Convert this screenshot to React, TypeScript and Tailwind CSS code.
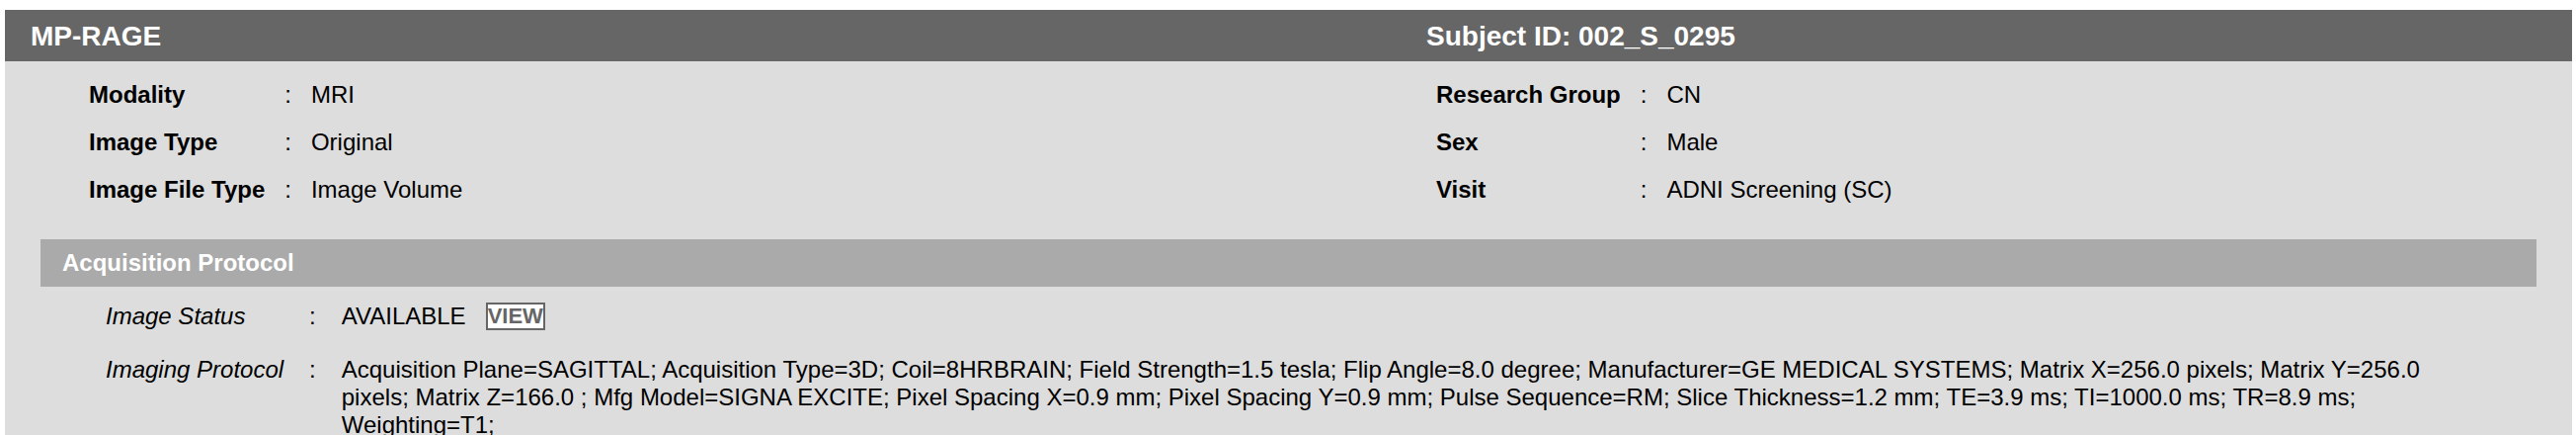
type Field = { label: string; value: string };

const imageFields: Field[] = [
  { label: "Modality", value: "MRI" },
  { label: "Image Type", value: "Original" },
  { label: "Image File Type", value: "Image Volume" },
];

const subjectFields: Field[] = [
  { label: "Research Group", value: "CN" },
  { label: "Sex", value: "Male" },
  { label: "Visit", value: "ADNI Screening (SC)" },
];

const protocol =
  "Acquisition Plane=SAGITTAL; Acquisition Type=3D; Coil=8HRBRAIN; Field Strength=1.5 tesla; Flip Angle=8.0 degree; Manufacturer=GE MEDICAL SYSTEMS; Matrix X=256.0 pixels; Matrix Y=256.0 pixels; Matrix Z=166.0 ; Mfg Model=SIGNA EXCITE; Pixel Spacing X=0.9 mm; Pixel Spacing Y=0.9 mm; Pulse Sequence=RM; Slice Thickness=1.2 mm; TE=3.9 ms; TI=1000.0 ms; TR=8.9 ms; Weighting=T1;";

function FieldTable({ fields }: { fields: Field[] }) {
  return (
    <table className="text-left">
      <tbody>
        {fields.map((f) => (
          <tr key={f.label} className="h-12">
            <th scope="row" className="p-0 font-bold">{f.label}</th>
            <td className="p-0 px-5">:</td>
            <td className="p-0">{f.value}</td>
          </tr>
        ))}
      </tbody>
    </table>
  );
}

export default function App() {
  return (
    <div className="h-screen overflow-hidden bg-white pl-[5px] pr-1 pt-2.5 font-['Liberation_Sans',Arial,sans-serif] text-2xl leading-7 text-black">
      <main className="min-h-full bg-[#dddddd]">
        <header className="grid h-13 grid-cols-[1413fr_1186fr] items-center bg-[#666666] pt-0.5 text-[28px] font-bold text-white">
          <h1 className="pl-[26px]">MP-RAGE</h1>
          <h2 className="pl-[26px]">Subject ID: 002_S_0295</h2>
        </header>

        <section className="grid grid-cols-[1413fr_1186fr] pt-[10px]">
          <div className="pl-[85px]">
            <FieldTable fields={imageFields} />
          </div>
          <div className="pl-9">
            <FieldTable fields={subjectFields} />
          </div>
        </section>

        <section className="mx-9 mt-[26px]">
          <h3 className="flex h-12 items-center bg-[#aaaaaa] pl-[22px] font-bold text-white">Acquisition Protocol</h3>
          <table className="ml-[66px] mr-16 mt-4 text-left">
            <tbody>
              <tr className="align-top">
                <th scope="row" className="p-0 pb-[26px] font-normal whitespace-nowrap italic">Image Status</th>
                <td className="p-0 px-[26px]">:</td>
                <td className="p-0">
                  <div className="flex h-7 items-center gap-5">
                    <span>AVAILABLE</span>
                    <button type="button" className="border-2 border-[#666666] bg-white text-[22px] font-bold leading-6 text-[#666666]">
                      VIEW
                    </button>
                  </div>
                </td>
              </tr>
              <tr className="align-top">
                <th scope="row" className="p-0 font-normal whitespace-nowrap italic">Imaging Protocol</th>
                <td className="p-0 px-[26px]">:</td>
                <td className="p-0">{protocol}</td>
              </tr>
            </tbody>
          </table>
        </section>
      </main>
    </div>
  );
}
